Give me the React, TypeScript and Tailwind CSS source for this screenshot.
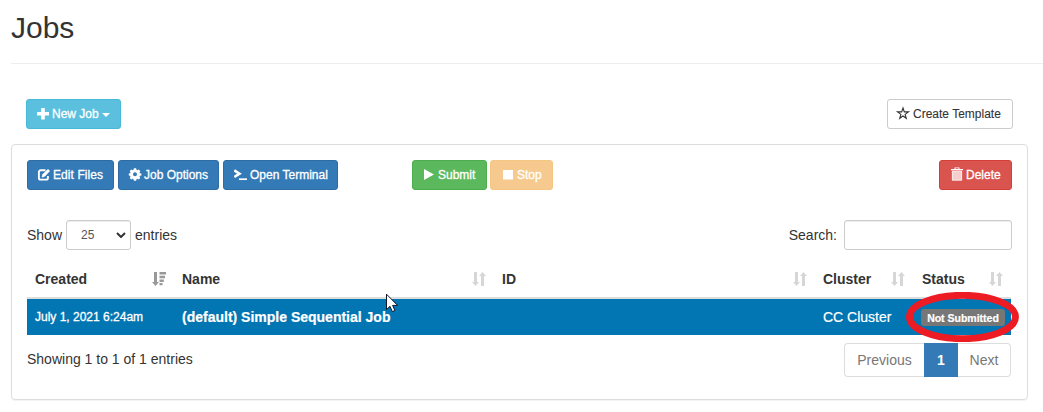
import type { ReactNode } from 'react';

function Btn({ className, children }: { className: string; children: ReactNode }) {
  return (
    <button className={`flex h-[30px] shrink-0 items-center rounded-[3px] border text-[12px] leading-[18px] whitespace-nowrap ${className}`}>
      {children}
    </button>
  );
}

function Icon({ children, className = 'mr-[3px]' }: { children: ReactNode; className?: string }) {
  return (
    <svg viewBox="0 0 12 12" fill="currentColor" className={`h-3 w-3 shrink-0 overflow-visible ${className}`}>
      {children}
    </svg>
  );
}

function SortIcon() {
  return (
    <svg viewBox="0 0 14 14" className="h-[14px] w-[14px] shrink-0 fill-[#d6d6d6]">
      <path d="M2 0h3v10h2L3.500 14 0 10h2zM9 14h3V4h2L10.500 0 7 4h2z" />
    </svg>
  );
}

function SortDescIcon() {
  return (
    <svg viewBox="0 0 15 14" className="h-[14px] w-[15px] shrink-0 fill-[#999]">
      <path d="M2 0h3v10h2L3.500 14 0 10h2zM7.500 0H14v2.500H7.500zM7.500 3.700H13v2.500H7.500zM7.500 7.400h4.300v2.500H7.500zM7.500 11h3v2.300h-3z" />
    </svg>
  );
}

function Head({ label, className, icon }: { label: string; className: string; icon: ReactNode }) {
  return (
    <th className="p-0 text-left font-bold">
      <div className={`flex h-[37px] items-center justify-between pt-px pl-2 ${className}`}>
        <span>{label}</span>
        {icon}
      </div>
    </th>
  );
}

export default function App() {
  return (
    <div className="relative h-[412px] w-[1043px] overflow-hidden bg-white font-['Liberation_Sans',Arial,sans-serif] text-[14px] leading-5 text-[#333]">
      <header className="ml-[11px] h-16 border-b border-[#eee] pt-[11px]">
        <h1 className="text-[30px] leading-[33px] font-normal">Jobs</h1>
      </header>

      <div className="mt-[35px] mr-[30px] ml-[26px] flex justify-between">
        <Btn className="w-[95px] border-[#46b8da] bg-[#5bc0de] pl-[10px] text-white [-webkit-text-stroke:0.3px]">
          <Icon>
            <path d="M4.200 0h3.600v4H12v3.500H7.800v4H4.200v-4H0V4h4.200z" />
          </Icon>
          New Job
          <svg viewBox="0 0 8 4" fill="currentColor" className="mt-px ml-[3px] h-1 w-2">
            <path d="M0 0h8L4 4z" />
          </svg>
        </Btn>
        <Btn className="w-[126px] border-[#ccc] bg-white pl-[10px] [-webkit-text-stroke:0.1px]">
          <Icon className="mr-[4px] -ml-px">
            <path
              d="M6 0 7.300 3.900H11.500L8.100 6.400 9.300 10.300 6 8 2.700 10.300 3.900 6.400.500 3.900H4.700z"
              fill="none"
              stroke="currentColor"
              strokeWidth="1.100"
            />
          </Icon>
          Create Template
        </Btn>
      </div>

      <section className="mt-[15px] ml-[11px] h-[256px] w-[1017px] rounded-[4px] border border-[#ddd] px-[15px] pt-[15px] shadow-[0_1px_1px_rgba(0,0,0,0.05)]">
        <div className="flex [-webkit-text-stroke:0.3px]">
          <Btn className="w-[87px] border-[#2e6da4] bg-[#337ab7] pl-[10px] text-white">
            <Icon>
              <path d="M7.500 1.300H2.600A1.700 1.700 0 0 0 .900 3v5.900a1.700 1.700 0 0 0 1.700 1.700h5.600a1.700 1.700 0 0 0 1.700-1.700V7" fill="none" stroke="currentColor" strokeWidth="1.900" />
              <path d="M10 0 12 2 6.900 7.500l-3.300 1 .9-3.200z" />
            </Icon>
            <span className="tracking-[0.08px]">Edit Files</span>
          </Btn>
          <Btn className="ml-1 w-[101px] border-[#2e6da4] bg-[#337ab7] pl-[10px] text-white">
            <Icon className="mr-[3px] -translate-y-px">
              <path
                fillRule="evenodd"
                d="M4.900.300h2.200l.4 1.500 1 .4 1.300-.8 1.500 1.500-.8 1.300.4 1 1.500.300v1.900l-1.500.4-.4 1 .8 1.300-1.500 1.500-1.300-.8-1 .4-.4 1.500H4.900l-.4-1.500-1-.4-1.300.8L.700 10.100l.8-1.300-.4-1L-.200 7.400V5.500l1.300-.300.4-1L.700 2.900 2.200 1.400l1.300.8 1-.4zM6 4.300a2 2 0 1 0 0 4 2 2 0 0 0 0-4z"
              />
            </Icon>
            Job Options
          </Btn>
          <Btn className="ml-1 w-[115px] border-[#2e6da4] bg-[#337ab7] pl-[10px] text-white">
            <svg viewBox="0 0 13 12" fill="none" stroke="currentColor" className="mr-[3px] h-3 w-[13px] shrink-0">
              <path d="M.300 1.400 5.500 4.700.300 8" strokeWidth="2.600" />
              <path d="M5 10.200h8" strokeWidth="1.700" />
            </svg>
            Open Terminal
          </Btn>
          <Btn className="ml-[74px] w-[75px] border-[#4cae4c] bg-[#5cb85c] pl-[10px] text-white">
            <Icon>
              <path d="M1 0 11 5.500 1 11z" />
            </Icon>
            Submit
          </Btn>
          <Btn className="ml-[3px] w-[63px] border-[#f5c682] bg-[#f6ca8e] pl-[11px] text-white">
            <Icon>
              <path d="M1 1h10v9.500H1z" />
            </Icon>
            Stop
          </Btn>
          <Btn className="ml-auto w-[73px] border-[#d43f3a] bg-[#d9534f] pl-[11px] text-white">
            <Icon>
              <path d="M3.500-1.500h5v1.500h3.500v1.200H0V0h3.500zM4.500-.700V0h3v-.700z" fillRule="evenodd" />
              <path d="M1 2h10v9.500H1z" fillOpacity=".72" />
              <path d="M1.300 2h9.400v9.200H1.300z" fill="none" stroke="currentColor" strokeWidth=".6" />
            </Icon>
            Delete
          </Btn>
        </div>

        <div className="mt-[30px] flex h-[30px] items-center">
          <span>Show</span>
          <div className="ml-1 flex h-[30px] w-[65px] items-center justify-between rounded-[3px] border border-[#ccc] pr-[4px] pl-[14px] text-[12px] text-[#555] shadow-[inset_0_1px_1px_rgba(0,0,0,0.075)]">
            25
            <svg viewBox="0 0 10 6" fill="none" stroke="#333" strokeWidth="2" className="h-[6px] w-[10px]">
              <path d="m1 1 4 4 4-4" />
            </svg>
          </div>
          <span className="ml-1">entries</span>
          <span className="ml-auto">Search:</span>
          <input aria-label="Search" className="ml-[7px] h-[30px] w-[168px] rounded-[3px] border border-[#ccc] shadow-[inset_0_1px_1px_rgba(0,0,0,0.075)]" />
        </div>

        <table className="mt-[10px] w-[984px] table-fixed border-collapse">
          <colgroup>
            <col className="w-[147px]" />
            <col className="w-[320px]" />
            <col className="w-[321px]" />
            <col className="w-[99px]" />
            <col className="w-[97px]" />
          </colgroup>
          <thead>
            <tr>
              <Head label="Created" className="pr-[7px]" icon={<SortDescIcon />} />
              <Head label="Name" className="pr-2" icon={<SortIcon />} />
              <Head label="ID" className="pr-2" icon={<SortIcon />} />
              <Head label="Cluster" className="pr-[9px]" icon={<SortIcon />} />
              <Head label="Status" className="pr-2" icon={<SortIcon />} />
            </tr>
          </thead>
          <tbody>
            <tr className="h-[38px] bg-[#0275b3] text-white">
              <td colSpan={5} className="p-0">
                <div className="flex h-[38px] items-center border-t-2 border-[#ddd]">
                  <span className="w-[147px] pl-2 text-[12px] [-webkit-text-stroke:0.3px]">July 1, 2021 6:24am</span>
                  <span className="w-[641px] pl-2 font-bold [-webkit-text-stroke:0.2px]">(default) Simple Sequential Job</span>
                  <span className="w-[99px] pl-2 [-webkit-text-stroke:0.2px]">CC Cluster</span>
                  <span className="mt-px ml-[7px] h-[17px] w-[84px] rounded-[3px] bg-[#777] text-center text-[10.500px] leading-[18px] font-bold whitespace-nowrap [-webkit-text-stroke:0.2px]">
                    Not Submitted
                  </span>
                </div>
              </td>
            </tr>
          </tbody>
        </table>

        <div className="mt-2 flex w-[984px] items-start justify-between">
          <span className="mt-[6px]">Showing 1 to 1 of 1 entries</span>
          <nav className="flex h-[34px] text-center leading-8 text-[#777]">
            <span className="w-[80px] rounded-l-[4px] border border-r-0 border-[#ddd]">Previous</span>
            <span className="w-[34px] border border-[#337ab7] bg-[#337ab7] font-bold text-white">1</span>
            <span className="w-[53px] rounded-r-[4px] border border-l-0 border-[#ddd]">Next</span>
          </nav>
        </div>
      </section>

      <svg viewBox="0 0 113 50" className="absolute top-[292px] left-[906px] h-[50px] w-[113px]">
        <ellipse cx="56.500" cy="25" rx="53" ry="21.700" fill="none" stroke="#ed1c24" strokeWidth="6.900" />
      </svg>
      <svg viewBox="0 0 13 20" className="absolute top-[293px] left-[386px] h-5 w-[13px]">
        <path d="M.500 1.200v15.300l3.500-3.200 2.300 5.300 2.600-1.100-2.300-5.100h5z" fill="#fff" stroke="#111827" />
      </svg>
    </div>
  );
}
